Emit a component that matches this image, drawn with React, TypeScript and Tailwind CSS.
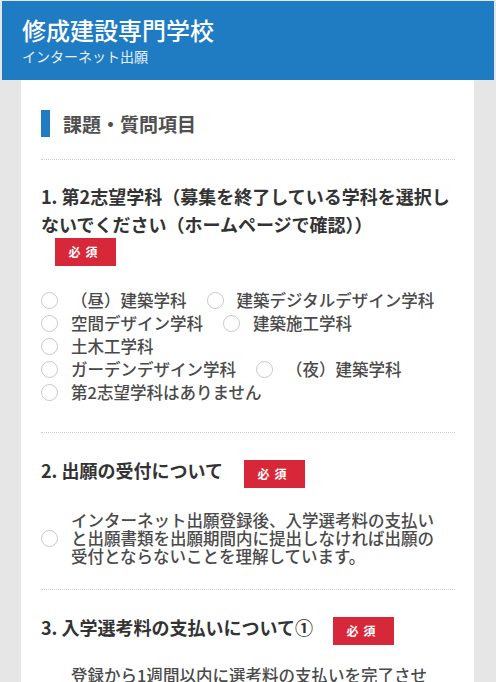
import React from "react";

const FONT = "font-['Noto_Sans_CJK_JP','Noto_Sans',sans-serif]";

function Badge({ className = "" }: { className?: string }) {
  return (
    <span
      className={`inline-flex h-[28px] w-[61px] shrink-0 items-center justify-center bg-[#d7283a] text-[12px] font-bold tracking-[5px] text-white ${className}`}
    >
      必須
    </span>
  );
}

function Radio() {
  return (
    <span className="inline-block h-[17px] w-[17px] shrink-0 rounded-full border-[1.5px] border-[#c8c8c8] bg-white" />
  );
}

function Option({ label, last = false }: { label: string; last?: boolean }) {
  return (
    <span className={`inline-flex items-center ${last ? "" : "mr-[20px]"}`}>
      <Radio />
      <span className="ml-[13px]">{label}</span>
    </span>
  );
}

function Separator({ className = "" }: { className?: string }) {
  return <div className={`border-t border-dotted border-[#cfcfcf] ${className}`} />;
}

const rows: string[][] = [
  ["（昼）建築学科", "建築デジタルデザイン学科"],
  ["空間デザイン学科", "建築施工学科"],
  ["土木工学科"],
  ["ガーデンデザイン学科", "（夜）建築学科"],
  ["第2志望学科はありません"],
];

export default function App() {
  return (
    <div className={`h-[682px] w-[496px] overflow-hidden bg-[#e6e6e6] pt-[1px] ${FONT}`}>
      {/* header */}
      <header className="mx-[2px] h-[79px] bg-[#1f7cc2] pl-[20px] pt-[14px] text-white">
        <h1 className="text-[24px] font-medium leading-[30px]">修成建設専門学校</h1>
        <p className="mt-[2px] text-[14px] leading-[18px] text-[#e8f1fa]">インターネット出願</p>
      </header>

      <main className="ml-[21px] w-[453px] bg-white pb-[40px] pl-[20px] pr-[19px] pt-[30px]">
        <div className="flex items-center">
          <span className="h-[27px] w-[9px] bg-[#1f7cc2]" />
          <h2 className="ml-[13px] text-[19px] font-bold leading-[27px] text-[#505050]">
            課題・質問項目
          </h2>
        </div>

        <Separator className="mt-[22px]" />

        {/* Q1 */}
        <p className="mt-[22px] text-[18px] font-bold leading-[28px] text-[#333]">
          1. 第2志望学科（募集を終了している学科を選択しないでください（ホームページで確認））
        </p>
        <Badge className="ml-[14px] mt-[-2px] flex" />

        <div className="mt-[23px] text-[16.5px] font-medium leading-[23px] text-[#4a4a4a]">
          {rows.map((row, i) => (
            <div key={i} className="flex items-center">
              {row.map((label, j) => (
                <Option key={label} label={label} last={j === row.length - 1} />
              ))}
            </div>
          ))}
        </div>

        <Separator className="mt-[28px]" />

        {/* Q2 */}
        <div className="mt-[23px] flex items-start">
          <p className="text-[18px] font-bold leading-[28px] text-[#333]">2. 出願の受付について</p>
          <Badge className="ml-[21px] mt-[4px]" />
        </div>

        <div className="mt-[23px] flex items-center text-[16.5px] font-medium leading-[18px] text-[#4a4a4a]">
          <Radio />
          <p className="ml-[13px]">
            インターネット出願登録後、入学選考料の支払い
            <br />
            と出願書類を出願期間内に提出しなければ出願の
            <br />
            受付とならないことを理解しています。
          </p>
        </div>

        <Separator className="mt-[24px]" />

        {/* Q3 */}
        <div className="mt-[23px] flex items-start">
          <p className="text-[18px] font-bold leading-[28px] text-[#333]">
            3. 入学選考料の支払いについて①
          </p>
          <Badge className="ml-[20px] mt-[4px]" />
        </div>

        <div className="mt-[21px] flex items-center text-[16.5px] font-medium leading-[18px] text-[#4a4a4a]">
          <Radio />
          <p className="ml-[13px]">
            登録から1週間以内に選考料の支払いを完了させ
            <br />
            ないと出願登録が無効になることを理解していま
            <br />
            す。
          </p>
        </div>
      </main>
    </div>
  );
}
